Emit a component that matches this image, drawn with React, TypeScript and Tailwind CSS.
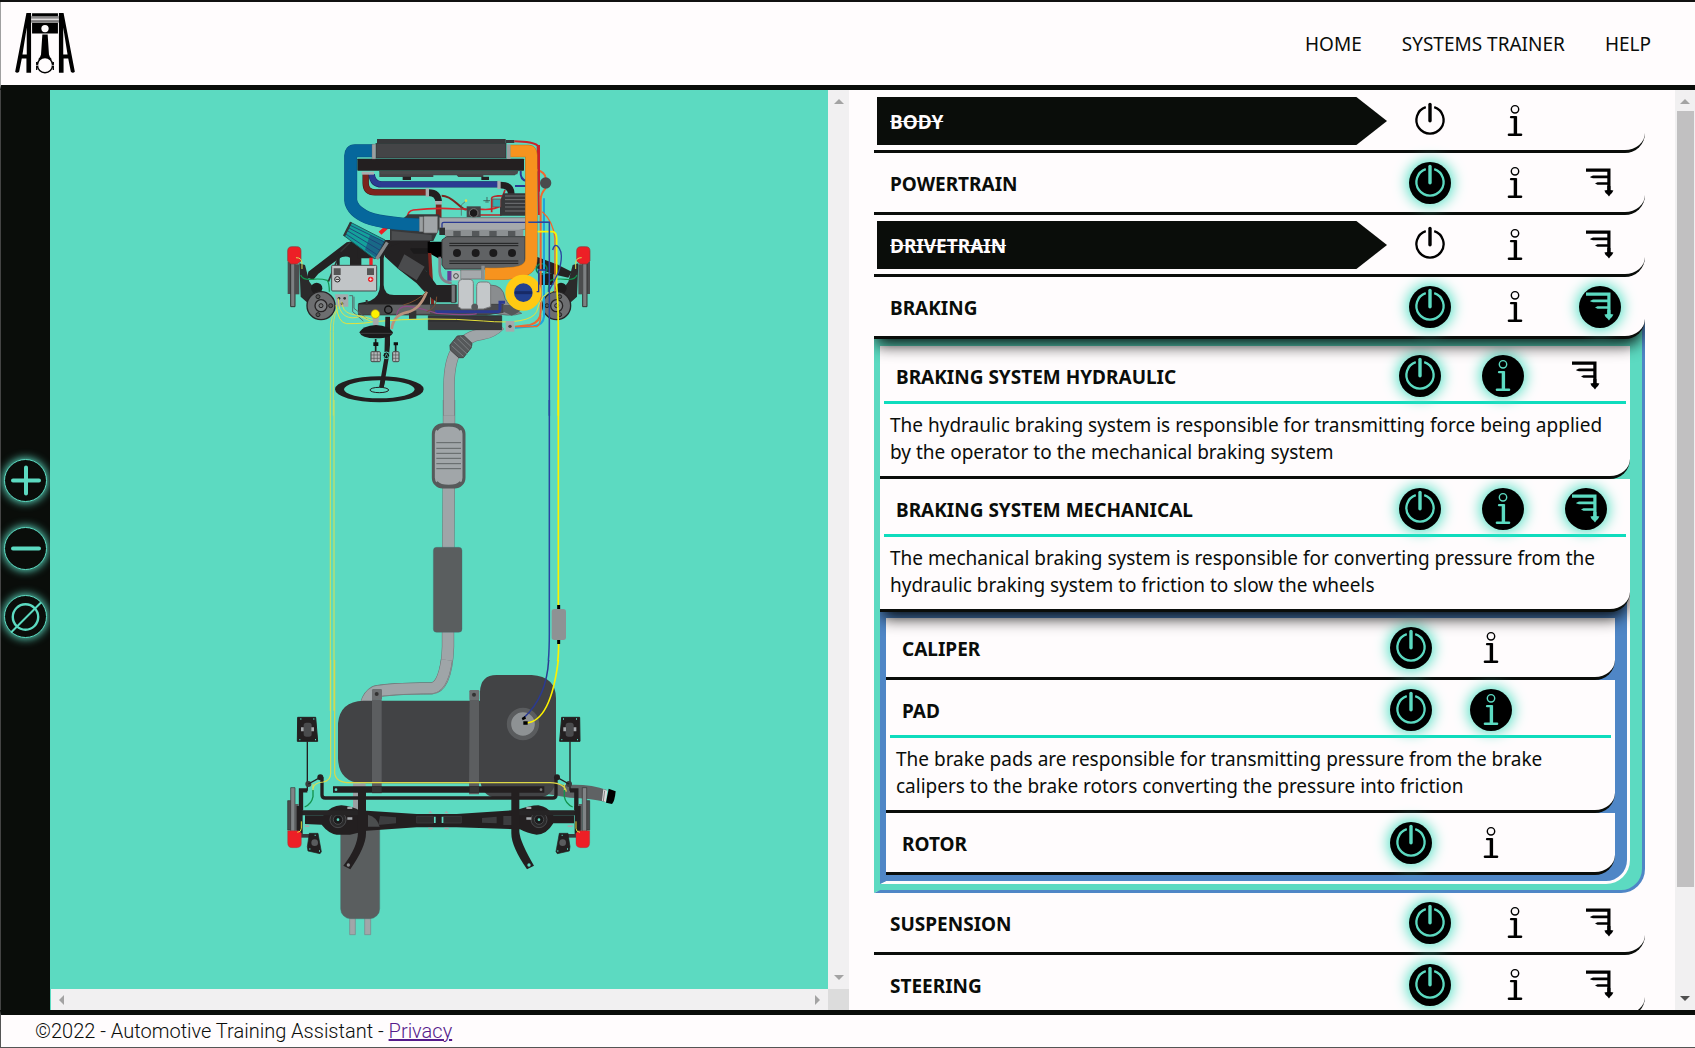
import React, { useState } from "react";
import clsx from "clsx";

type Item = {
  name: string;
  on?: boolean;
  info?: string;
  showInfo?: boolean;
  open?: boolean;
  expandable?: boolean;
  children?: Item[];
};

const SYSTEMS: Item[] = [
  { name: "BODY", on: false },
  { name: "POWERTRAIN", on: true, expandable: true },
  { name: "DRIVETRAIN", on: false, expandable: true },
  {
    name: "BRAKING",
    on: true,
    expandable: true,
    open: true,
    children: [
      {
        name: "BRAKING SYSTEM HYDRAULIC",
        on: true,
        expandable: true,
        showInfo: true,
        info: "The hydraulic braking system is responsible for transmitting force being applied by the operator to the mechanical braking system",
      },
      {
        name: "BRAKING SYSTEM MECHANICAL",
        on: true,
        expandable: true,
        showInfo: true,
        open: true,
        info: "The mechanical braking system is responsible for converting pressure from the hydraulic braking system to friction to slow the wheels",
        children: [
          { name: "CALIPER", on: true },
          {
            name: "PAD",
            on: true,
            showInfo: true,
            info: "The brake pads are responsible for transmitting pressure from the brake calipers to the brake rotors converting the pressure into friction",
          },
          { name: "ROTOR", on: true },
        ],
      },
    ],
  },
  { name: "SUSPENSION", on: true, expandable: true },
  { name: "STEERING", on: true, expandable: true },
];

function PowerIcon() {
  return (
    <svg viewBox="0 0 42 42" className="size-[42px]" fill="none" stroke="currentColor" aria-hidden="true">
      <path d="M16.8 7.1A13.6 13.6 0 1 0 25.2 7.1" strokeWidth="2.3" />
      <path d="M21 4.4V20.8" strokeWidth="3.4" strokeLinecap="round" />
    </svg>
  );
}

function InfoIcon() {
  return (
    <svg viewBox="0 0 42 42" className="size-[42px]" fill="none" stroke="currentColor" aria-hidden="true">
      <circle cx="21" cy="9.3" r="3.7" strokeWidth="1.4" />
      <path d="M17 17.2H21.3" strokeWidth="2.2" strokeLinecap="round" />
      <path d="M21.4 16.2V34.5" strokeWidth="3.4" />
      <path d="M15 34.7H27" strokeWidth="2.6" strokeLinecap="round" />
    </svg>
  );
}

function BranchIcon() {
  return (
    <svg viewBox="0 0 42 42" className="size-[42px]" fill="currentColor" aria-hidden="true">
      <path d="M7 6.6H31.5V28.4H28.3V9.8H7Z" />
      <path d="M11.3 14.8 14 13.6H29V16.2H14L11.3 15.4Z" />
      <path d="M16 21.6 18.5 20.2H29V22.8H18.5Z" />
      <path d="M25.4 28.6 28.4 28V24H31.4V28L34.4 28.6 33 31 31.4 32.4 30 34.4 28.4 32.4 26.6 31Z" />
    </svg>
  );
}

function IconButton(props: { label: string; active: boolean; onClick: () => void; children: React.ReactNode }) {
  return (
    <button
      type="button"
      aria-label={props.label}
      aria-pressed={props.active}
      onClick={props.onClick}
      className={clsx(
        "size-[42px] rounded-full place-self-center cursor-pointer",
        props.active ? "bg-black text-[#5cdac1] shadow-[0_0_14px_2px_#4fe0c4]" : "text-black",
      )}
    >
      {props.children}
    </button>
  );
}

function SystemRow({ item, level }: { item: Item; level: number }) {
  const [on, setOn] = useState(!!item.on);
  const [info, setInfo] = useState(!!item.showInfo);
  const [open, setOpen] = useState(!!item.open);
  const expanded = open && !!item.children;
  return (
    <li>
      <div
        className={clsx(
          "relative rounded-br-[20px] border-b-3 border-[#0a0d0a] bg-[#fffcfd]",
          expanded && "z-10 shadow-[0_8px_16px_-2px_rgba(0,0,0,0.9)] [clip-path:inset(0_0_-30px_0)]",
        )}
      >
        <div className="grid grid-cols-9 px-[3px] pt-1.5 pb-[5px]">
          <h2
            className={clsx(
              "col-span-6 flex h-12 items-center pt-0.5 pl-[13px] text-[19px] font-bold",
              on
                ? "text-[#0a0d0a]"
                : "bg-[#0a0d0a] text-[#fffcfd] line-through [clip-path:polygon(0_0,94%_0,100%_50%,94%_100%,0_100%)]",
            )}
          >
            {item.name}
          </h2>
          <IconButton label={"Toggle " + item.name} active={on} onClick={() => setOn(!on)}>
            <PowerIcon />
          </IconButton>
          <IconButton label={"About " + item.name} active={info} onClick={() => setInfo(!info)}>
            <InfoIcon />
          </IconButton>
          {item.expandable && (
            <IconButton label={"Expand " + item.name} active={open} onClick={() => setOpen(!open)}>
              <BranchIcon />
            </IconButton>
          )}
        </div>
        {info && item.info && (
          <div className="-mt-1">
            <hr className="mx-1 border-0 border-t-3 border-[#0fdcbd]" />
            <p className="px-2.5 pt-2 pb-2.5 text-[19px] leading-[27px] text-[#0a0d0a]">{item.info}</p>
          </div>
        )}
      </div>
      {expanded && (
        <ul
          className={clsx(
            "-mt-5 rounded-br-[24px] border-r-3 border-b-3 border-l-6 pr-3 pb-1.5",
            level === 0
              ? "border-[#4f86c6] border-l-[#5cdac1] bg-[#5cdac1] pt-[27px]"
              : "border-[#fffcfd] border-l-[#4f86c6] bg-[#4f86c6] pt-[26px]",
          )}
        >
          {item.children!.map((c) => (
            <SystemRow key={c.name} item={c} level={level + 1} />
          ))}
        </ul>
      )}
    </li>
  );
}

function Logo() {
  return (
    <svg viewBox="0 0 186 190" className="h-[63px] w-[62px]" aria-label="Automotive Training Assistant" role="img">
      <g transform="translate(-42 -37)">
        <path d="M79 40H93V220H79V177H65L57 217Q51 223 45 217ZM80 84 67 165H80Z" />
        <path d="M191 40H177V220H191V177H205L213 217Q219 223 225 217ZM190 84 203 165H190Z" />
        <path d="M96 41H174V49H96ZM96 70H174V102H96Z" />
        <path d="M93 51H177V57H93ZM93 60H177V67H93Z" fill="#8a8889" />
        <path d="M94 50H176M94 68H176" stroke="#222" strokeWidth="2" />
        <circle cx="135" cy="87" r="11" fill="#fffcfd" />
        <path d="M127 105H143L147 165Q148 172 156 180L114 180Q122 172 123 165Z" />
        <circle cx="135" cy="197" r="23" fill="#fffcfd" stroke="#000" strokeWidth="4.5" />
        <path d="M110 188V212M160 188V212" stroke="#000" strokeWidth="4" />
        <path d="M106 198H114M156 198H164" stroke="#fffcfd" strokeWidth="2" />
      </g>
    </svg>
  );
}

function Pipe({ d, c, w, e = "#6d7375" }: { d: string; c: string; w: number; e?: string }) {
  return (
    <g fill="none" strokeLinejoin="round">
      <path d={d} stroke={e} strokeWidth={w} />
      <path d={d} stroke={c} strokeWidth={w - 3} />
    </g>
  );
}

function FrontWheel() {
  return (
    <g>
      <path d="M88 415 105 420 118 470 140 500 120 540 92 515Z" fill="#2b2a2b" />
      <path d="M53 410H65V507H53Z" fill="#4b4d4e" />
      <path d="M62 415H75V545H62Z" fill="#7c8082" stroke="#333" strokeWidth="3" />
      <path d="M74 418H88V508H74Z" fill="#4b4d4e" />
      <path d="M53 378Q53 365 66 365H80Q93 365 93 378V408L82 417H62L53 408Z" fill="#ed1f26" stroke="#8a3a3a" strokeWidth="2" />
      <path d="M78 398Q96 398 96 415V432" fill="none" stroke="#d9df54" strokeWidth="3" />
      <path d="M92 450Q98 466 125 463T172 466Q178 475 178 500" fill="none" stroke="#12934d" strokeWidth="3.5" />
      <circle cx="140" cy="490" r="17" fill="#1f1d1e" />
      <circle cx="153" cy="542" r="42" fill="#6d6e70" stroke="#262425" strokeWidth="4" />
      <circle cx="153" cy="542" r="18" fill="#7d7f81" stroke="#262425" strokeWidth="4" />
      <circle cx="153" cy="542" r="6" fill="#777" stroke="#222" strokeWidth="3" />
      <circle cx="182" cy="542" r="6" fill="#555" stroke="#222" strokeWidth="3" />
      <circle cx="144" cy="515" r="6" fill="#555" stroke="#222" strokeWidth="3" />
      <circle cx="144" cy="569" r="6" fill="#555" stroke="#222" strokeWidth="3" />
    </g>
  );
}

function FrontEnd() {
  return (
    <g transform="translate(270 125) scale(0.33333)">
      <Pipe d="M537 872V780Q538 705 562 672Q590 632 640 627Q668 622 690 600" c="#9fa5a8" w={34} />
      <path d="M540 660 562 633 582 632 606 655 604 668 580 698 566 698 541 675Z" fill="#55585a" stroke="#444" strokeWidth="3" />
      <path d="M551 650 592 688M562 641 598 677M545 662 580 694M570 634 605 666" stroke="#8e9395" strokeWidth="2" />
      {/* subframe and control arms */}
      <path
        d="M115 440 230 352 272 345V398H240Q225 390 205 402L145 446 130 464 112 458ZM240 398H274V430H240Z"
        fill="#242223"
      />
      <path
        fillRule="evenodd"
        d="M262 345H480V560H265V535L300 528Q330 515 330 480V400H262ZM341 400V480Q342 510 372 510H470V440L420 385H360Q341 385 341 400Z"
        fill="#242223"
      />
      <path d="M390 370H500V386H390Z" fill="#1b1a1b" />
      <path d="M800 395 860 418 905 440 895 458 850 448 800 430Z" fill="#242223" />
      <path d="M808 445H850V480H808Z" fill="#1b1a1b" />
      <circle cx="815" cy="432" r="16" fill="none" stroke="#0a7a52" strokeWidth="5" />
      <path d="M175 470 212 380 240 352" fill="none" stroke="#333" strokeWidth="5" />
      <FrontWheel />
      <g transform="translate(1013 0) scale(-1 1)">
        <FrontWheel />
      </g>
      {/* intercooler and radiator */}
      <rect x="321" y="42" width="386" height="14" fill="#37383a" />
      <rect x="707" y="45" width="26" height="9" fill="#37383a" />
      <path d="M328 138H745L735 151H640V156H565L560 151H490V156H328Z" fill="#434446" />
      <path d="M398 155H423V165H398ZM634 155H657V165H634Z" fill="#242223" />
      <rect x="318" y="56" width="390" height="43" fill="#444547" stroke="#2c2c2d" strokeWidth="2" />
      <rect x="262" y="101" width="500" height="36" rx="2" fill="#231f20" />
      <path d="M328 138H745L742 148H333Z" fill="#4a4b4d" />
      {/* coolant hoses */}
      <Pipe d="M287 145V175Q288 202 315 202H470" c="#7b241d" w={19} e="#3f1512" />
      <Pipe d="M305 148Q308 178 335 178H685" c="#2b3a92" w={19} e="#1c2663" />
      <path d="M275 140H312V149H275Z" fill="#a9adb0" />
      <path d="M476 203Q505 203 506 232" fill="none" stroke="#231f20" strokeWidth="20" />
      <path d="M690 180Q724 180 724 208" fill="none" stroke="#231f20" strokeWidth="20" />
      <path d="M467 190H477V215H467ZM682 167H692V192H682Z" fill="#a9adb0" />
      <path d="M506 238V285" stroke="#7b241d" strokeWidth="17" />
      <path d="M495 228H516V238H495Z" fill="#a9adb0" />
      <path d="M515 212Q535 212 560 235T590 252" fill="none" stroke="#7b241d" strokeWidth="6" />
      <path d="M412 280Q412 258 430 255Q500 247 560 252H625Q670 258 695 240" fill="none" stroke="#d8262b" strokeWidth="5" />
      <path d="M630 270H695M665 262V220Q665 212 700 212M690 235 705 195" fill="none" stroke="#b8262b" strokeWidth="5" />
      <path d="M574 272V240L590 226" fill="none" stroke="#555" strokeWidth="2" />
      <circle cx="588" cy="227" r="4" fill="#d9df54" />
      <path d="M640 227H660M646 231H656M651 216V227" stroke="#333" strokeWidth="2" fill="none" />
      <path d="M735 183H770M752 138Q750 165 770 168" fill="none" stroke="#2b3a92" strokeWidth="6" />
      <path d="M733 49Q790 50 803 62L807 270" fill="none" stroke="#c9222a" strokeWidth="6" />
      {/* right side lines */}
      <path d="M800 135Q825 140 827 160M827 190Q812 205 812 225V560Q812 590 780 600L735 605" fill="none" stroke="#f0682f" strokeWidth="6" />
      <path d="M822 220V575Q820 600 790 604L735 608" fill="none" stroke="#1fa4dd" strokeWidth="6" />
      <path d="M817 260Q850 290 855 340V500" fill="none" stroke="#f0682f" strokeWidth="4" />
      <circle cx="827" cy="174" r="17" fill="#4a4b4d" />
      {/* relay box */}
      <path d="M700 205H768V272H690V230Z" fill="#37383a" />
      <path d="M705 213H766M705 224H766M705 235H766M705 246H766M705 258H766" stroke="#707375" strokeWidth="3" />
      <path d="M668 222H692V246H668Z" fill="#32adb0" stroke="#9a2a2a" strokeWidth="2" />
      {/* throttle and intake */}
      <path d="M360 312 415 268H505L520 285 490 348H360Z" fill="#37383a" />
      <path d="M365 318 485 330V345H365Z" fill="#4b4d4f" />
      <path d="M330 325 355 302" stroke="#ed1f26" strokeWidth="12" />
      <Pipe d="M310 77H255Q242 77 242 92V225Q244 252 280 272Q320 295 455 300" c="#06679c" w={39} e="#0a5580" />
      <path d="M306 58H317V102H306ZM448 275H459V320H448Z" fill="#9b9fa1" stroke="#666" strokeWidth="1" />
      <rect x="461" y="274" width="42" height="50" rx="3" fill="#a1a5a8" stroke="#666" strokeWidth="2" />
      {/* engine */}
      <rect x="590" y="244" width="42" height="32" fill="#434446" />
      <circle cx="611" cy="264" r="13" fill="#1b1a1b" stroke="#777" strokeWidth="3" />
      <path d="M508 278H768V312L740 318H508Z" fill="#a5a9ac" stroke="#5e6163" strokeWidth="2" />
      <path d="M516 308V296Q516 292 522 292H838" fill="none" stroke="#2b3a92" strokeWidth="4" />
      <path d="M525 314H760V335H525Z" fill="#8c9092" />
      <path d="M550 318H572V333H550ZM606 318H628V333H606ZM658 318H680V333H658ZM714 318H736V333H714Z" fill="#55585a" />
      <rect x="508" y="308" width="17" height="22" fill="#2e2e2f" />
      <path d="M473 350H520V400H505L473 382Z" fill="#000" />
      <path d="M474 384H484L494 560H484Z" fill="#7b241d" />
      <path d="M509 395V440Q512 472 545 474" fill="none" stroke="#85808a" strokeWidth="8" />
      <path d="M516 345 530 335H765V432H525L516 420Z" fill="#606264" stroke="#3b3c3d" strokeWidth="3" />
      <path d="M538 355H745M538 362H745M538 408H745M538 415H745" stroke="#1e1e1f" strokeWidth="3" />
      <circle cx="561" cy="384" r="12" fill="#1b1a1b" />
      <circle cx="617" cy="384" r="12" fill="#1b1a1b" />
      <circle cx="670" cy="384" r="12" fill="#1b1a1b" />
      <circle cx="726" cy="384" r="12" fill="#1b1a1b" />
      {/* intercooler outlet */}
      <path d="M711 58H722V102H711Z" fill="#9b9fa1" />
      <Pipe d="M722 78H775Q784 78 784 90V400Q784 432 750 440Q710 449 645 446" c="#f7931e" w={37} e="#b8741f" />
      <path d="M807 60V200" stroke="#c9222a" strokeWidth="6" />
      {/* turbo */}
      <path d="M572 435H635V462H572Z" fill="#a5a9ac" stroke="#666" strokeWidth="2" />
      <path d="M634 422H644V465H634Z" fill="#8c9092" />
      <path d="M532 438H545V467H532Z" fill="#6a3c97" />
      <rect x="545" y="438" width="26" height="28" fill="#c0c4c6" />
      <circle cx="558" cy="453" r="7" fill="none" stroke="#444" strokeWidth="3" />
      <path d="M660 480Q700 480 705 520 720 550 755 565 720 578 650 560Z" fill="#8a8d8f" stroke="#555" strokeWidth="2" />
      {/* cold air intake */}
      <path d="M345 370 400 350Q440 355 420 372L500 480H560V532H500Q470 510 440 475L385 432 345 395Z" fill="#242223" />
      <path d="M403 388 464 425 440 466 383 430Z" fill="#4a4b4d" />
      <path d="M242 292 345 345 315 402 222 332Z" fill="#14a19b" stroke="#1d5e63" strokeWidth="3" />
      <path d="M239 300 342 350M235 308 337 362M230 316 330 376M226 326 322 390" stroke="#1e3d77" strokeWidth="2.5" />
      <path d="M300 330 343 350 318 398 285 375Z" fill="#1e3d77" opacity="0.55" />
      <path d="M243 292 222 333" stroke="#343536" strokeWidth="7" />
      <path d="M352 352 320 402" stroke="#85898b" strokeWidth="10" />
      <path d="M544 480H556V533H544Z" fill="#77797b" stroke="#333" strokeWidth="2" />
      {/* battery */}
      <path d="M205 432V408Q204 396 212 380" fill="none" stroke="#242223" strokeWidth="8" />
      <path d="M303 430V398" stroke="#ed1f26" strokeWidth="10" />
      <rect x="185" y="421" width="135" height="77" rx="3" fill="#c1c5c7" stroke="#46484a" strokeWidth="3" />
      <path d="M191 430H212V450H191ZM291 430H312V450H291Z" fill="#555" />
      <circle cx="202" cy="463" r="8" fill="#ddd" stroke="#222" strokeWidth="3" />
      <path d="M197 463H207" stroke="#222" strokeWidth="3" />
      <circle cx="302" cy="463" r="8" fill="#ed1f26" />
      <path d="M297 463H307M302 458V468" stroke="#fff" strokeWidth="2" />
      {/* steering rack */}
      <path d="M265 538H700V562L650 570H265Z" fill="#4a4b4d" stroke="#333" strokeWidth="2" />
      <path d="M360 540H480V566H360Z" fill="#626466" />
      <path d="M290 525V540M420 560H436V578H420Z" stroke="#333" strokeWidth="6" fill="#333" />
      <path d="M475 572H695V614H475Z" fill="#37383a" stroke="#222" strokeWidth="2" />
      <path d="M475 588H695" stroke="#222" strokeWidth="2" />
      <path d="M700 540H755Q760 560 725 572L700 560Z" fill="#55585a" />
      <path d="M495 560H685Q690 560 690 550V532H705" fill="none" stroke="#2b3a92" strokeWidth="9" />
      <path d="M380 570Q385 540 420 545T500 565Q600 572 620 566" fill="none" stroke="#8c4a86" strokeWidth="4" />
      <path d="M365 612Q370 570 410 562T470 500" fill="none" stroke="#b9927c" strokeWidth="8" />
      <path d="M400 540Q440 530 470 500M500 515Q500 550 470 560" fill="none" stroke="#7a4f31" strokeWidth="3" />
      <circle cx="355" cy="554" r="11" fill="#4a4b4d" stroke="#111" strokeWidth="4" />
      {/* coolant reservoirs */}
      <path d="M565 475Q565 463 577 463H597Q610 463 610 475V552H575L565 545Z" fill="#c4c8ca" stroke="#77797b" strokeWidth="3" />
      <path d="M620 485Q620 471 632 471H650Q662 471 662 485V545L640 552H620Z" fill="#c4c8ca" stroke="#77797b" strokeWidth="3" />
      <circle cx="614" cy="546" r="10" fill="#55585a" />
      <circle cx="760" cy="503" r="41" fill="#22408f" stroke="#ffc913" strokeWidth="26" />
      <path d="M735 503H786" stroke="#172a66" strokeWidth="9" />
      <path d="M800 500H806V435H830" fill="none" stroke="#2b3a92" strokeWidth="4" />
      {/* brake junction and lines */}
      <path d="M195 508H235V545H200Z" fill="#a5a9ac" />
      <circle cx="207" cy="520" r="4" fill="#333" />
      <circle cx="224" cy="520" r="4" fill="#333" />
      <circle cx="216" cy="536" r="4" fill="#333" />
      <path d="M238 512H248V560L280 588M252 515V550L290 580" fill="none" stroke="#55585a" strokeWidth="2.5" />
      <path d="M205 520Q205 560 225 572T270 574L305 590M215 530Q218 560 240 566T280 575L315 585" fill="none" stroke="#d9df54" strokeWidth="3" />
      <path d="M198 540Q205 595 230 596Q290 596 310 590Q480 575 640 588Q780 600 800 560Q815 500 848 500" fill="none" stroke="#e6e13a" strokeWidth="3" />
      <path d="M707 588H733V620H707Z" fill="#a5a9ac" />
      <circle cx="720" cy="604" r="5" fill="#444" />
      <path d="M735 605H800Q812 600 812 570" fill="none" stroke="#f0682f" strokeWidth="4" />
      <path d="M205 550Q180 570 181 620V872M200 555Q189 580 190 620V872" fill="none" stroke="#c3e068" strokeWidth="3" />
      <path d="M803 320H848Q860 322 860 340V480Q865 540 865 600V872" fill="none" stroke="#fdf200" strokeWidth="5" />
      <path d="M775 292H838V872" fill="none" stroke="#2a46a0" strokeWidth="4.5" />
      <path d="M848 375Q855 350 868 370T866 440Q850 475 835 500" fill="none" stroke="#2a46a0" strokeWidth="4" />
      {/* master cylinder, pedals and wheel */}
      <path d="M346 575H360V660L356 700 341 790H327L343 700Z" fill="#231f20" />
      <path d="M307 575H327L325 604H310Z" fill="#a5a9ac" />
      <circle cx="316" cy="567" r="13" fill="#fdf200" stroke="#a59a20" strokeWidth="2" />
      <path d="M268 622Q278 602 318 600 358 602 369 622 365 640 318 640 274 640 268 622Z" fill="#1b1a1b" />
      <path d="M270 625H368" stroke="#4f4f50" strokeWidth="2" />
      <circle cx="349" cy="691" r="10" fill="#111" stroke="#5cdac1" strokeWidth="3" />
      <path d="M345 696 349 686 354 696" fill="none" stroke="#5cdac1" strokeWidth="2" />
      <path d="M317 642V680M377 655V680" stroke="#222" strokeWidth="5" />
      <path d="M310 652H325V663H310ZM371 652H384V661H371Z" fill="#111" />
      <rect x="303" y="680" width="28" height="30" rx="3" fill="#b4b8ba" stroke="#444" strokeWidth="3" />
      <path d="M303 690H331M303 700H331M312 680V710M322 680V710" stroke="#555" strokeWidth="2" />
      <rect x="368" y="680" width="19" height="30" rx="3" fill="#b4b8ba" stroke="#444" strokeWidth="3" />
      <path d="M368 690H387M368 700H387M377 680V710" stroke="#555" strokeWidth="2" />
      <path
        fillRule="evenodd"
        d="M195 793A133 39 0 1 0 461 793A133 39 0 1 0 195 793ZM222 793A106 27 0 1 1 434 793A106 27 0 1 1 222 793Z"
        fill="#231f20"
      />
      <ellipse cx="328" cy="795" rx="28" ry="8" fill="#5cdac1" stroke="#231f20" strokeWidth="3" />
      <path d="M329 786 333 760H347L341 786Z" fill="#231f20" />
    </g>
  );
}

function Midsection() {
  return (
    <g transform="translate(320 400) scale(0.33333)">
      <Pipe d="M387 0V100L384 620V740Q380 862 335 865Q200 866 165 875Q145 885 138 930" c="#9fa5a8" w={37} />
      <path d="M31 0V932M42 0V932" stroke="#c9e062" strokeWidth="3.5" />
      <rect x="340" y="74" width="92" height="187" rx="28" fill="#a1a6a9" stroke="#565a5b" strokeWidth="9" />
      <path d="M350 90Q360 76 386 76T422 90M350 246Q360 258 386 258T422 246" fill="none" stroke="#565a5b" strokeWidth="7" />
      <path d="M349 128H423M349 145H423M349 160H423M349 175H423M349 191H423M349 206H423" stroke="#5f6466" strokeWidth="3" />
      <rect x="340" y="442" width="86" height="255" rx="10" fill="#5a5e5f" stroke="#44696a" strokeWidth="1" />
    </g>
  );
}

function RearHub() {
  return (
    <g>
      <path d="M83 172H137L143 244H82Z" fill="#231f20" stroke="#231f20" strokeWidth="3" strokeLinejoin="round" />
      <rect x="101" y="188" width="24" height="42" rx="8" fill="#4a4b4d" />
      <path d="M93 202H101V214H93ZM124 202H132V214H124Z" fill="#a5a9ac" />
      <path d="M91 177H94M130 177H133M88 239H91M135 239H138" stroke="#5cdac1" strokeWidth="4" />
      <path d="M112 244V392" stroke="#231f20" strokeWidth="4" />
      <circle cx="115" cy="372" r="9" fill="#3a3b3c" />
      <circle cx="151" cy="352" r="9" fill="#231f20" />
      <path d="M115 372 151 352" stroke="#231f20" strokeWidth="4" />
      <path d="M112 391H93V450" fill="none" stroke="#231f20" strokeWidth="13" />
      <path d="M53 422H65V510H53Z" fill="#4a4b4d" stroke="#333" strokeWidth="2" />
      <path d="M62 383H75V515H62Z" fill="#808486" stroke="#333" strokeWidth="2" />
      <path d="M75 432H86V512H75Z" fill="#5a5c5e" />
      <path d="M80 438H98V525H80Z" fill="#231f20" />
      <path d="M88 522H128V533H88Z" fill="#3a3b3c" />
      <path d="M53 512H88L94 520V550Q94 563 80 563H66Q53 563 53 548Z" fill="#ed1f26" stroke="#8a3a3a" strokeWidth="1" />
      <path d="M94 484V505Q94 516 82 517" fill="none" stroke="#e6d93a" strokeWidth="3" />
      <path d="M129 372V392" stroke="#d9df54" strokeWidth="3" />
      <path d="M129 390V410Q125 432 104 441" fill="none" stroke="#12934d" strokeWidth="4" />
      <path d="M118 520H144L154 575 150 581 114 573 112 560Z" fill="#231f20" stroke="#231f20" strokeWidth="2" />
      <circle cx="134" cy="548" r="10" fill="#5a5c5e" />
      <path d="M118 567H121M147 573H150M134 526H137" stroke="#5cdac1" strokeWidth="4" />
    </g>
  );
}

function RearEnd() {
  return (
    <g transform="translate(270 660) scale(0.33333)">
      <Pipe d="M530 0Q518 82 485 84Q350 86 315 95Q295 105 288 130" c="#9fa5a8" w={35} />
      {/* fuel tank */}
      <path d="M835 365 880 375Q960 370 1010 390L1005 425Q960 415 900 413L815 400Z" fill="#5f6264" />
      <path d="M1000 388 1012 392 1008 426 996 422Z" fill="#ddd" />
      <path d="M1004 392 1000 424" stroke="#555" strokeWidth="2" />
      <path d="M1016 386 1037 394Q1034 425 1026 432L1008 428Z" fill="#000" />
      <path d="M630 122V95Q632 45 680 45H785Q858 50 858 115V360Q850 412 800 414H680Q640 410 632 370H275Q206 365 204 295V190Q210 124 280 122Z" fill="#424345" />
      <path d="M306 118H335V400H306ZM599 118H627V403H597Z" fill="#5c5e60" />
      <rect x="306" y="87" width="30" height="32" rx="4" fill="#6c6f71" />
      <rect x="598" y="90" width="30" height="30" rx="4" fill="#6c6f71" />
      <circle cx="320" cy="102" r="6" fill="#333" />
      <circle cx="612" cy="104" r="6" fill="#333" />
      <circle cx="759" cy="192" r="42" fill="#8e9294" stroke="#5a5c5e" strokeWidth="13" />
      <path d="M836 0Q830 110 762 173" fill="none" stroke="#2b3a92" strokeWidth="4.5" />
      <path d="M865 0Q842 185 768 189" fill="none" stroke="#fdf200" strokeWidth="5" />
      <path d="M755 174 765 168 768 176 758 181ZM760 184H773V194H760Z" fill="#000" />
      {/* muffler */}
      <path d="M239 770H256V824H239ZM284 770H302V824H284Z" fill="#a1a6a9" stroke="#73888a" strokeWidth="2" />
      <path d="M249 370H287V480H249Z" fill="#9a9fa2" />
      <rect x="212" y="466" width="117" height="310" rx="30" fill="#5a5e5f" stroke="#4a6f6e" strokeWidth="1.5" />
      {/* sway bar */}
      <path d="M156 352V405Q156 414 166 414H848Q858 414 858 405V352" fill="none" stroke="#231f20" strokeWidth="10" />
      {/* axle */}
      <path
        d="M105 466H160Q185 435 215 436 250 440 270 452H290L440 462H560L740 450Q780 436 805 436 835 440 850 466H912V490H850Q830 524 800 524 770 520 750 508L560 502H440L290 512 240 524H200Q175 520 155 494L105 492Z"
        fill="#231f20"
      />
      <path d="M330 468 378 472V490L325 495ZM680 470 636 474V488L680 490ZM700 468H745V495H700Z" fill="#3c3d3f" />
      <path d="M440 469H490V489H440ZM520 469H574V489H520Z" fill="#2d2c2d" stroke="#3f4042" strokeWidth="2" />
      <path d="M294 465Q320 470 329 500H294Z" fill="#4b4d4e" />
      <path d="M492 470H497V489H492ZM515 470H520V489H515Z" fill="#5cdac1" />
      <path d="M475 460 481 452 488 460ZM523 460 529 452 536 460ZM475 503H488V508H475ZM523 503H536V508H523Z" fill="#a5a9ac" />
      <circle cx="204" cy="479" r="24" fill="#2a292a" stroke="#4a4b4d" strokeWidth="3" />
      <circle cx="204" cy="479" r="14" fill="#1b1a1b" stroke="#4a4b4d" strokeWidth="3" />
      <circle cx="204" cy="479" r="4" fill="#5cdac1" />
      <circle cx="807" cy="479" r="24" fill="#2a292a" stroke="#4a4b4d" strokeWidth="3" />
      <circle cx="807" cy="479" r="14" fill="#1b1a1b" stroke="#4a4b4d" strokeWidth="3" />
      <circle cx="807" cy="479" r="4" fill="#5cdac1" />
      <path d="M92 451H270V466H92ZM745 451H922V466H745Z" fill="#262425" />
      <path d="M232 440H247V447H232ZM232 472H247V479H232ZM769 440H784V447H769ZM769 472H784V479H769ZM105 496H118V501H105ZM893 496H908V501H893Z" fill="#a5a9ac" />
      <RearHub />
      <g transform="translate(1012 0) scale(-1 1)">
        <RearHub />
      </g>
      {/* tow frame */}
      <path d="M189 379H823V398H748V515Q750 545 792 617L771 628Q724 560 724 520V398H288V520Q288 560 241 628L220 617Q264 560 264 515V398H189Z" fill="#231f20" />
      <path d="M599 379H627V398H599ZM306 379H335V398H306Z" fill="#353536" />
      <circle cx="198" cy="389" r="4" fill="#5cdac1" />
      <circle cx="813" cy="389" r="4" fill="#777" />
      <circle cx="777" cy="615" r="5" fill="#5cdac1" />
      <circle cx="235" cy="615" r="5" fill="#8a8d8f" />
      {/* brake lines */}
      <path d="M182 0V340Q182 362 160 366 132 368 129 385" fill="none" stroke="#d9df54" strokeWidth="3.5" />
      <path d="M194 0V340Q198 368 240 368H840Q885 370 889 395" fill="none" stroke="#ddd646" strokeWidth="3.5" />
    </g>
  );
}

function FuelLines() {
  return (
    <g transform="translate(320 400) scale(0.33333)" fill="none">
      <path d="M688 0V700Q688 750 685 782" stroke="#2a46a0" strokeWidth="4.5" />
      <path d="M715 0V620M716 725Q716 760 713 784" stroke="#fdf200" strokeWidth="5" />
      <path d="M716 615V628M716 720V732" stroke="#000" strokeWidth="9" />
      <rect x="695" y="627" width="43" height="93" rx="8" fill="#8e9294" />
    </g>
  );
}

function Chassis() {
  return (
    <svg
      viewBox="259 130 360 810"
      className="mx-auto mt-10 h-[810px] w-[360px] shrink-0"
      role="img"
      aria-label="Vehicle chassis diagram"
    >
      <Midsection />
      <RearEnd />
      <FuelLines />
      <FrontEnd />
    </svg>
  );
}

function Arrow({ dir, dark }: { dir: "up" | "down" | "left" | "right"; dark?: boolean }) {
  const d = {
    up: "M0 5 5 0 10 5Z",
    down: "M0 0H10L5 5Z",
    left: "M5 0V10L0 5Z",
    right: "M0 0 5 5 0 10Z",
  }[dir];
  const flat = dir === "up" || dir === "down";
  return (
    <svg
      viewBox={flat ? "0 0 10 5" : "0 0 5 10"}
      className={clsx(flat ? "h-[5px] w-[10px]" : "h-[10px] w-[5px]", dark ? "text-[#505050]" : "text-[#a3a3a3]")}
      fill="currentColor"
      aria-hidden="true"
    >
      <path d={d} />
    </svg>
  );
}

function ZoomButton({ label, children }: { label: string; children: React.ReactNode }) {
  return (
    <button
      type="button"
      aria-label={label}
      className="size-[43px] cursor-pointer rounded-full border border-[#5cdac1] bg-[#0a0d0a] text-[#5cdac1] shadow-[0_0_8px_1px_#5cdac1]"
    >
      <svg viewBox="0 0 41 41" className="size-[41px]" fill="none" stroke="currentColor" aria-hidden="true">
        {children}
      </svg>
    </button>
  );
}

export default function App() {
  return (
    <div className="flex h-screen flex-col overflow-hidden border-t-2 border-b border-t-[#111111] border-b-[#555555] bg-[#fffcfd] font-['Noto_Sans',sans-serif] text-[#0a0d0a]">
      <header className="flex h-22 shrink-0 items-center justify-between border-b-5 border-l border-[#0a0d0a] border-l-[#a0a0a0] pr-11 pl-[13px]">
        <a href="#home">
          <Logo />
        </a>
        <nav className="flex gap-10 pt-0.5 text-[19px]">
          <a href="#home">HOME</a>
          <a href="#trainer">SYSTEMS TRAINER</a>
          <a href="#help">HELP</a>
        </nav>
      </header>

      <main className="flex min-h-0 flex-1">
        <aside className="flex w-[50px] shrink-0 flex-col items-center justify-center gap-[25px] border-l border-[#444444] bg-[#0a0d0a] pb-[3px]">
          <ZoomButton label="Zoom in">
            <path d="M8 20.5H34M21 7.5V33.5" strokeWidth="4" strokeLinecap="round" />
          </ZoomButton>
          <ZoomButton label="Zoom out">
            <path d="M8 20.5H34" strokeWidth="4" strokeLinecap="round" />
          </ZoomButton>
          <ZoomButton label="Reset zoom">
            <circle cx="20.5" cy="21" r="12.7" strokeWidth="2.4" />
            <path d="M6 36.5 36 6.5" strokeWidth="2" />
          </ZoomButton>
        </aside>

        <section className="flex min-w-0 flex-[799] flex-col">
          <div className="flex min-h-0 flex-1">
            <div className="flex flex-1 overflow-hidden bg-[#5cdac1]">
              <Chassis />
            </div>
            <div className="flex w-[21px] flex-col items-center justify-between bg-[#f1f0f1] py-[9px]">
              <Arrow dir="up" />
              <Arrow dir="down" />
            </div>
          </div>
          <div className="flex h-[21px] shrink-0">
            <div className="flex flex-1 items-center justify-between border-l border-[#5cdac1] bg-[#f1f0f1] px-2">
              <Arrow dir="left" />
              <Arrow dir="right" />
            </div>
            <div className="w-[21px] bg-[#dcdcdc]" />
          </div>
        </section>

        <section className="flex min-w-0 flex-[846]">
          <div className="min-w-0 flex-1 overflow-hidden pt-px pr-[30px] pl-[25px]">
            <ul>
              {SYSTEMS.map((s) => (
                <SystemRow key={s.name} item={s} level={0} />
              ))}
            </ul>
          </div>
          <div className="flex w-5 flex-col items-center bg-[#f1f0f1] py-[9px]">
            <Arrow dir="up" />
            <div className="mt-[7px] mb-auto h-[86%] w-[17px] bg-[#c1c0c1]" />
            <Arrow dir="down" dark />
          </div>
        </section>
      </main>

      <footer className="h-[37px] shrink-0 border-t-5 border-l border-[#0a0d0a] border-l-[#555555] pl-[34px] font-['Roboto',sans-serif] text-xl leading-[32px] font-light">
        ©2022 - Automotive Training Assistant -{" "}
        <a href="#privacy" className="text-[#551a8b] underline">
          Privacy
        </a>
      </footer>
    </div>
  );
}
